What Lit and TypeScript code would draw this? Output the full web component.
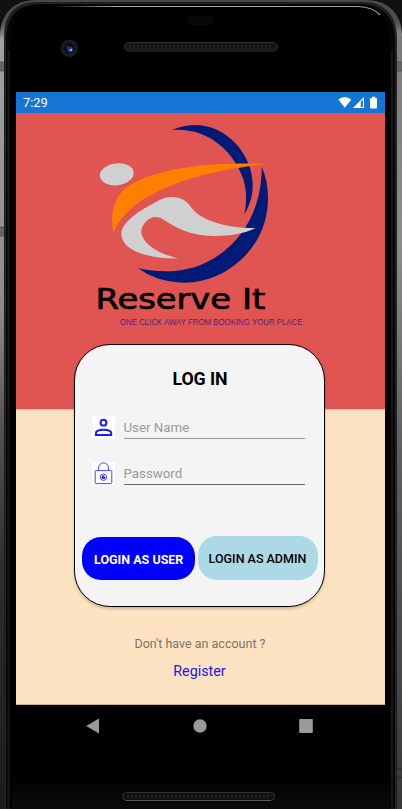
import { LitElement, html, css, svg } from "lit";
import { customElement } from "lit/decorators.js";

@customElement("device-frame")
class DeviceFrame extends LitElement {
  static styles = css`
    :host { display: block; width: 402px; height: 809px; }
    svg { display: block; }
  `;
  render() {
    const slots = (x: number, y: number) =>
      Array.from({ length: 36 }, (_, i) => svg`<rect x=${x + i * 4} y=${y} width="2" height="4" fill="#221f1c"/>`);
    return html`<svg width="402" height="809" viewBox="0 0 402 809">
      <defs>
        <linearGradient id="rim" x1="0" y1="0" x2="0" y2="809" gradientUnits="userSpaceOnUse">
          <stop offset="0" stop-color="#484848"/><stop offset=".028" stop-color="#505050"/><stop offset=".05" stop-color="#a0a0a0"/>
          <stop offset=".38" stop-color="#8c8c8c"/><stop offset=".52" stop-color="#555"/>
          <stop offset=".7" stop-color="#2e2e2e"/><stop offset="1" stop-color="#1c1c1c"/>
        </linearGradient>
        <linearGradient id="rimRight" x1="0" y1="0" x2="0" y2="809" gradientUnits="userSpaceOnUse">
          <stop offset="0" stop-color="#777"/><stop offset=".3" stop-color="#8c8c8c"/>
          <stop offset=".55" stop-color="#606060"/><stop offset="1" stop-color="#383838"/>
        </linearGradient>
        <linearGradient id="shine" x1="50" x2="382" y1="0" y2="0" gradientUnits="userSpaceOnUse">
          <stop offset="0" stop-color="#aaa" stop-opacity="0"/><stop offset=".2" stop-color="#aaa"/>
          <stop offset="1" stop-color="#9ba3a3"/>
        </linearGradient>
        <linearGradient id="floor" x1="0" x2="0" y1="0" y2="1">
          <stop offset="0" stop-color="#000"/><stop offset="1" stop-color="#0b0b0b"/>
        </linearGradient>
      </defs>
      <rect width="402" height="809" fill="#111"/>
      <path d="M0 809V36C0 14 14 0 36 0H366C388 0 402 14 402 36V809Z" fill="url(#rim)"/>
      <path d="M397 809V34L402 36V809Z" fill="url(#rimRight)"/>
      <path d="M4 809V37C4 15 15 2 37 2H363C386 2 397 17 397 40V809Z" fill="#1d1d1d"/>
      <path d="M5.500 809V40C5.500 16 18 3.500 40 3.500H360C384 3.500 395.500 18 395.500 40V809Z" fill="#050505" stroke="#2c2c2c" stroke-width=".8"/>
      <path d="M8.500 50V809M392 50V809" stroke="#171717" stroke-width="2"/>
      <path d="M11 809V42C11 18 20 5 44 5H358C382 5 390 20 390 42V809Z" fill="#000"/>
      <path d="M50 6.500H358Q373 7 380 15" fill="none" stroke="url(#shine)" stroke-width="1.200"/>
      <path d="M0 62h4v9H0zM397 62h5v9h-5zM0 227h4v9H0z" fill="#656565"/>
      <path d="M0 62h4M0 71h4M397 62h5M397 71h5M0 227h4M0 236h4" stroke="#484848" stroke-width=".7"/>
      <path d="M396 769h6M396 777.500h6" stroke="#222" stroke-width=".8"/>
      <rect x="12" y="775" width="378" height="34" fill="url(#floor)"/>
      <rect x="187" y="16" width="27" height="9.500" rx="4.700" fill="#070809"/>
      <circle cx="69.300" cy="48.300" r="8.700" fill="#1c1c1e"/>
      <circle cx="69.300" cy="48.300" r="5.200" fill="#080a18"/>
      <circle cx="70" cy="49.500" r="3" fill="#26346f"/>
      <circle cx="71" cy="50" r="1.300" fill="#8ea2f4"/>
      <circle cx="67.500" cy="46.500" r=".8" fill="#324d9a"/>
      <rect x="124.500" y="42.500" width="153" height="8.500" rx="4.250" fill="#171614" stroke="#333130"/>
      ${slots(129, 45)}
      <rect x="122.500" y="792.500" width="152" height="8" rx="4" fill="#11100f" stroke="#343331"/>
      <path d="M126 800.500H271" stroke="#5b5856"/>
      ${slots(127, 794.5)}
    </svg>`;
  }
}

@customElement("brand-logo")
class BrandLogo extends LitElement {
  static styles = css`
    :host { display: block; }
    svg { display: block; }
    .name { font: 400 28px "DejaVu Sans", sans-serif; }
    .tag { font: 400 8.2px "Liberation Sans", Arial, sans-serif; }
  `;
  render() {
    return html`<svg width="230" height="218" viewBox="85 115 230 218">
      <path fill="#001b76" d="M171.700 130C180 126.500 188 125 195.500 125C221 125 243 145 250 168C255 186 253 200 244.300 214.300C247 202 246.500 189 243.300 179C235 155 211 127 171.700 130Z"/>
      <path fill="#001b76" d="M261.700 166.700C268 181 269.500 197 266.500 214C260 252 224 282.700 184 282.700C166 282.500 150 277 138.300 268.300C162 273.500 188 272.500 209 261C243 243 262 208 261.700 166.700Z"/>
      <path fill="#ff8000" d="M267.700 163.700C233 163 201 164 174 169.500C151 174.500 133 181 123 190.500C112 202 110.500 218 113.500 233C119 217 133 205 149 196C177 180.500 210 170.500 267.700 163.700Z"/>
      <ellipse cx="116.800" cy="174.300" rx="17" ry="11" transform="rotate(-7 116.800 174.300)" fill="#d0d0d0"/>
      <path fill="#d0d0d0" d="M171 197C164 197 157 201.500 151.700 204.300C138 211.500 121.300 223 121.300 234C122 252 152 259 178.300 258.500C157 253 145 245 141.500 234C139.500 225.500 149 217 155 217C161 217 164 220 168 222.500C182 231 195 236 215 236C230 236 244 233.500 255.700 228.300C240 228 224 226 211 221C201 217 195 213 189 204.500C184 198.500 177 197 171 197Z"/>
      <g fill="#000" stroke="#000" stroke-width=".7">
        <text class="name" x="95.500" y="308.500" textLength="135.500" lengthAdjust="spacingAndGlyphs">Reserve</text>
        <text class="name" x="242" y="308.500" textLength="23.500" lengthAdjust="spacingAndGlyphs">It</text>
      </g>
      <text class="tag" x="120" y="325" textLength="182.500" lengthAdjust="spacingAndGlyphs" fill="#5b1e78">ONE CLICK AWAY FROM BOOKING YOUR PLACE</text>
    </svg>`;
  }
}

@customElement("app-root")
class AppRoot extends LitElement {
  static styles = css`
    :host { display: block; width: 402px; height: 809px; position: relative; overflow: hidden;
      font-family: Roboto, sans-serif; background: #000; }
    * { box-sizing: border-box; }
    svg { display: block; }
    device-frame { position: absolute; inset: 0; }
    .phone { position: relative; height: 809px; padding: 92px 17px 0 16px; }
    .status { height: 21px; background: #1575d4; display: flex; align-items: center; padding: 0 7px; color: #fff; font-size: 12.8px; }
    .status svg { margin-left: auto; }
    .screen { height: 592px; background: linear-gradient(#e05552 296px, #d8bd9c 296px, #fee3c3 298px); border-bottom: 1px solid #c9b294;
      display: flex; flex-direction: column; align-items: center; }
    brand-logo { margin: 2px 1px 0 0; height: 218px; }
    .card { margin: 11px 0 0 -2px; width: 251px; height: 263px; background: #f4f4f4; border: 1.5px solid #000; border-radius: 36px;
      box-shadow: 0 2px 3px #0003; display: flex; flex-direction: column; padding: 0 6px 0 7px; }
    h1 { margin: 23px 0 0; height: 23px; font-size: 17.8px; line-height: 22px; font-weight: 700; text-align: center; color: #000; letter-spacing: -.1px; }
    .row { display: flex; align-items: flex-start; height: 23px; padding-left: 10px; gap: 8.500px; }
    .first { margin-top: 25px; }
    .second { margin-top: 23px; }
    .field { width: 181.500px; height: 23px; border-bottom: 1px solid #999; font-size: 13.3px; line-height: 23px; color: #9a9a9a; }
    .second .field { border-color: #6a6a6a; }
    .actions { display: flex; align-items: flex-end; gap: 3px; margin-top: 51px; height: 44px; }
    button { border: 0; padding: 1px 0 0; font: 500 12.5px Roboto, sans-serif; white-space: nowrap; height: 43px; border-radius: 19px; }
    .user { width: 112.500px; background: #00f; color: #fff; font-weight: 700; padding-left: 1px; }
    .admin { width: 120px; height: 44px; background: #add8e6; color: #000; }
    .ask { margin-top: 29px; height: 16px; line-height: 16px; font-size: 12.5px; color: #7e7161; margin-right: 1px; }
    .register { margin-top: 10px; height: 18px; line-height: 18px; font-size: 14.3px; color: #2214f0; margin-right: 2px; }
    .nav { height: 42px; display: flex; align-items: center; justify-content: space-between; padding: 0 72px 0 70px; }
  `;
  render() {
    return html`
      <device-frame></device-frame>
      <main class="phone">
        <header class="status"><span>7:29</span>
          <svg width="40" height="13" viewBox="0 0 40 13" fill="#fff">
            <path d="M.3 3.500Q6.800-1.500 13.300 3.500L6.800 11.800Z"/>
            <path fill-rule="evenodd" d="M14.800 12L26 1V12ZM22.800 5.800V10.900H24.900V3.700Z"/>
            <path d="M34 .8h3.200V2H38q1 0 1 1v8.500q0 1-1 1h-5q-1 0-1-1V3q0-1 1-1h1Z"/>
          </svg>
        </header>
        <section class="screen">
          <brand-logo></brand-logo>
          <div class="card">
            <h1>LOG IN</h1>
            <div class="row first">
              <svg width="23" height="23" viewBox="0 0 23 23"><path fill="#fff" d="M0 0h23v23H0z"/>
                <g fill="none" stroke="#1c1cf5" stroke-width="2"><circle cx="11.500" cy="6.700" r="2.900"/><path d="M3.900 18.900V17.300C3.900 12.500 19.200 12.500 19.200 17.300V18.900Z"/></g></svg>
              <div class="field">User Name</div>
            </div>
            <div class="row second">
              <svg width="23" height="23" viewBox="0 0 23 23"><path fill="#fff" d="M0 0h23v23H0z"/>
                <g fill="none" stroke="#3535f5" stroke-width=".9"><rect x="3.200" y="8.600" width="16.600" height="13" rx=".8"/><path d="M6.600 8.600V6C6.600-.8 16.500-.8 16.500 6V8.600"/><circle cx="11.500" cy="15.200" r="3.200"/></g>
                <circle cx="11.500" cy="15.200" r="1.900" fill="#1c1cd0"/><path d="M11.500 15.200L13.500 13.500" stroke="#fff" stroke-width=".9"/></svg>
              <div class="field">Password</div>
            </div>
            <div class="actions"><button class="user">LOGIN AS USER</button><button class="admin">LOGIN AS ADMIN</button></div>
          </div>
          <div class="ask">Don't have an account ?</div>
          <div class="register">Register</div>
        </section>
        <nav class="nav">
          <svg width="14" height="16" viewBox="0 0 14 16"><path d="M.2 8L13 .6V15.400Z" fill="#9a9a9a"/></svg>
          <svg width="14" height="14" viewBox="0 0 14 14"><circle cx="7" cy="7" r="6.700" fill="#9a9a9a"/></svg>
          <svg width="14" height="14" viewBox="0 0 14 14"><rect x=".2" width="13.600" height="14" rx=".7" fill="#9a9a9a"/></svg>
        </nav>
      </main>`;
  }
}
